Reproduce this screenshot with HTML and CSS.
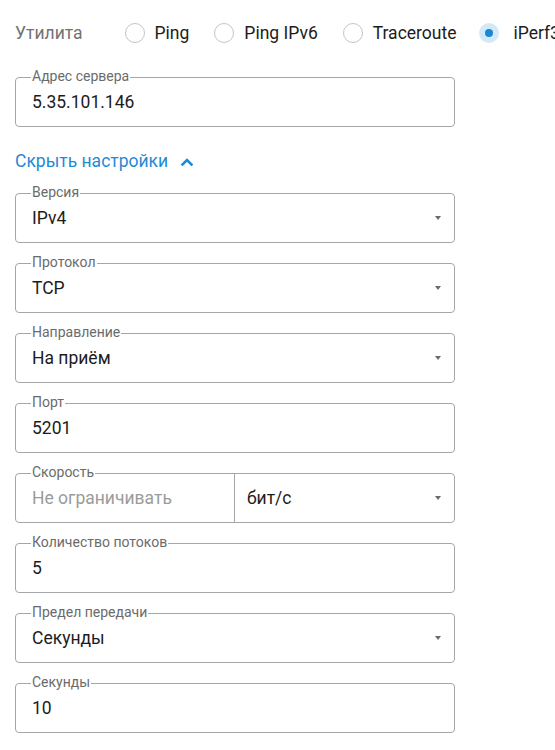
FILE: index.html
```html
<!DOCTYPE html>
<html lang="ru">
<head>
<meta charset="utf-8">
<title>iPerf3</title>
<link rel="stylesheet" href="styles.css">
</head>
<body>
<div class="page">
  <div class="tools">
    <span class="tools-label">Утилита</span>
    <label class="opt opt-first"><span class="radio"></span><span>Ping</span></label>
    <label class="opt"><span class="radio"></span><span>Ping IPv6</span></label>
    <label class="opt"><span class="radio"></span><span>Traceroute</span></label>
    <label class="opt opt-on"><span class="radio radio-on"><span class="dot"></span></span><span>iPerf3</span></label>
  </div>

  <div class="field field-first">
    <span class="field-label">Адрес сервера</span>
    <span class="value">5.35.101.146</span>
  </div>

  <div class="toggle">
    <span>Скрыть настройки</span>
    <svg class="chev" width="14" height="10" viewBox="0 0 14 10"><polyline points="1.6,8.4 7,3 12.4,8.4" fill="none" stroke="#1f8ad6" stroke-width="2.6" stroke-linecap="butt" stroke-linejoin="miter"/></svg>
  </div>

  <div class="fields">
    <div class="field select">
      <span class="field-label">Версия</span>
      <span class="value">IPv4</span>
      <span class="arrow"></span>
    </div>
    <div class="field select">
      <span class="field-label">Протокол</span>
      <span class="value">TCP</span>
      <span class="arrow"></span>
    </div>
    <div class="field select">
      <span class="field-label">Направление</span>
      <span class="value">На приём</span>
      <span class="arrow"></span>
    </div>
    <div class="field">
      <span class="field-label">Порт</span>
      <span class="value">5201</span>
    </div>
    <div class="field split">
      <span class="field-label">Скорость</span>
      <div class="split-input"><span class="placeholder">Не ограничивать</span></div>
      <div class="split-select"><span class="value">бит/с</span><span class="arrow"></span></div>
    </div>
    <div class="field">
      <span class="field-label">Количество потоков</span>
      <span class="value">5</span>
    </div>
    <div class="field select">
      <span class="field-label">Предел передачи</span>
      <span class="value">Секунды</span>
      <span class="arrow"></span>
    </div>
    <div class="field">
      <span class="field-label">Секунды</span>
      <span class="value">10</span>
    </div>
  </div>
</div>
</body>
</html>
```

FILE: styles.css
```css
* { box-sizing: border-box; }
html, body { margin: 0; padding: 0; background: #fff; }
body {
  font-family: Roboto, "Noto Sans", "Liberation Sans", sans-serif;
  color: #1c1c1c;
  font-size: 17.5px;
  line-height: 20px;
}
.page { padding: 23px 0 0 15px; width: 555px; overflow: hidden; }

.tools { display: flex; align-items: center; height: 20px; white-space: nowrap; }
.tools-label { color: #727272; }
.opt { display: flex; align-items: center; gap: 10px; margin-left: 25px; flex: none; }
.opt-first { margin-left: 42px; }
.opt-on { gap: 14px; margin-left: 23px; }
.radio {
  width: 20px; height: 20px; border-radius: 50%;
  border: 1px solid #c2c4c6; background: #fff;
  display: flex; align-items: center; justify-content: center;
  flex: none;
}
.radio-on { border: none; background: #d4e9f8; }
.dot { width: 8px; height: 8px; border-radius: 50%; background: #1a87d6; }

.field {
  position: relative;
  width: 440px; height: 50px;
  border: 1px solid #a4a7aa; border-radius: 4px;
  display: flex; align-items: center;
  padding: 0 12px 0 16px;
}
.field-first { margin-top: 34px; }
.field-label {
  position: absolute; top: -10px; left: 15px;
  padding: 0 1px; background: #fff;
  font-size: 14px; line-height: 16px; color: #6b6b6b;
  white-space: nowrap;
}
.value { flex: 1; }
.arrow {
  width: 0; height: 0;
  border-left: 3.5px solid transparent;
  border-right: 3.5px solid transparent;
  border-top: 4px solid #6a6a6a;
  margin-right: 1px;
}

.toggle {
  display: flex; align-items: center; gap: 12px;
  margin-top: 24px; color: #1f8ad6;
}
.chev { display: block; margin-top: 1px; }

.fields { display: flex; flex-direction: column; gap: 20px; margin-top: 22px; }

.split { padding: 0; }
.split-input {
  width: 219px; height: 100%;
  display: flex; align-items: center;
  padding-left: 16px;
  border-right: 1px solid #a4a7aa;
}
.placeholder { color: #9b9b9b; }
.split-select {
  flex: 1; height: 100%;
  display: flex; align-items: center;
  padding: 0 12px 0 12px;
}
```
